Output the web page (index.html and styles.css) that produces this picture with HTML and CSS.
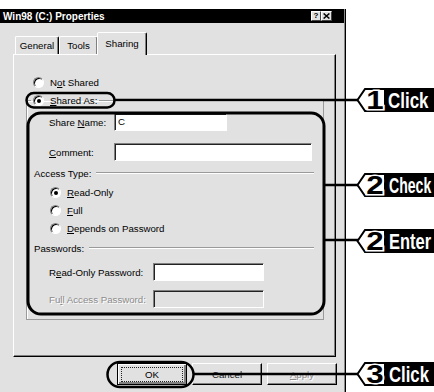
FILE: index.html
```html
<!DOCTYPE html>
<html>
<head>
<meta charset="utf-8">
<title>Win98 (C:) Properties</title>
<link rel="stylesheet" href="styles.css">
</head>
<body>
<div class="window">
  <div class="titlebar">
    <span class="title">Win98 (C:) Properties</span>
    <span class="tb-btn help">?</span>
    <span class="tb-btn close"><svg width="7" height="6" viewBox="0 0 7 6"><path d="M0.6 0.5 L6.4 5.5 M6.4 0.5 L0.6 5.5" stroke="#000" stroke-width="1.5"/></svg></span>
  </div>
  <div class="tabs">
    <div class="tab t-general">General</div>
    <div class="tab t-tools">Tools</div>
    <div class="tab t-sharing">Sharing</div>
  </div>
  <div class="panel">
    <div class="opt top-opt"><span class="radio"></span><span>N<u>o</u>t Shared</span></div>
    <fieldset class="group">
      <legend class="legend"><span class="opt"><span class="radio on"></span><span><u>S</u>hared As:</span></span></legend>
      <div class="field f-name"><span class="lbl">Share <u>N</u>ame:</span><span class="input w-name">C</span></div>
      <div class="field f-comment"><span class="lbl"><u>C</u>omment:</span><span class="input w-comment"></span></div>
      <div class="section s-access"><span>Access Type:</span><span class="rule"></span></div>
      <div class="opt sub first"><span class="radio on"></span><span><u>R</u>ead-Only</span></div>
      <div class="opt sub"><span class="radio"></span><span><u>F</u>ull</span></div>
      <div class="opt sub"><span class="radio"></span><span><u>D</u>epends on Password</span></div>
      <div class="section s-pass"><span>Passwords:</span><span class="rule"></span></div>
      <div class="field f-ro"><span class="lbl lbl-pw">R<u>e</u>ad-Only Password:</span><span class="input w-pw"></span></div>
      <div class="field f-full"><span class="lbl lbl-pw off">Fu<u>l</u>l Access Password:</span><span class="input w-pw disabled"></span></div>
    </fieldset>
  </div>
  <div class="buttons">
    <div class="btn default"><span class="focus">OK</span></div>
    <div class="btn cancel">Cancel</div>
    <div class="btn off"><span><u>A</u>pply</span></div>
  </div>
</div>

<svg class="marks" width="434" height="392" viewBox="0 0 434 392">
  <g fill="none" stroke="#000" stroke-width="2.5">
    <rect x="26.5" y="93" width="88" height="14.5" rx="7.25"/>
    <line x1="114" y1="100" x2="358" y2="100"/>
    <rect x="28" y="113" width="296" height="201" rx="13" stroke-width="3"/>
    <line x1="325" y1="185" x2="358" y2="185"/>
    <line x1="325" y1="240" x2="358" y2="240"/>
    <rect x="107.5" y="362" width="86" height="25" rx="12.5"/>
    <line x1="194" y1="374" x2="358" y2="374"/>
  </g>
  <g transform="translate(356,88)">
    <path class="tag-shape" d="M1.5 12 L9 1 H30 V23 H9 Z"/>
    <rect class="tag-box" x="28" y="0" width="50" height="24"/>
    <text class="tag-num halo" transform="translate(19,21) scale(1.25,1)" text-anchor="middle">1</text>
    <text class="tag-num" transform="translate(19,21) scale(1.25,1)" text-anchor="middle">1</text>
    <text class="tag-lbl" transform="translate(32,20) scale(0.77,1)">Click</text>
  </g>
  <g transform="translate(356,173)">
    <path class="tag-shape" d="M1.5 12 L9 1 H30 V23 H9 Z"/>
    <rect class="tag-box" x="28" y="0" width="50" height="24"/>
    <text class="tag-num halo" transform="translate(19,21) scale(1.25,1)" text-anchor="middle">2</text>
    <text class="tag-num" transform="translate(19,21) scale(1.25,1)" text-anchor="middle">2</text>
    <text class="tag-lbl" transform="translate(33,20) scale(0.64,1)">Check</text>
  </g>
  <g transform="translate(356,229)">
    <path class="tag-shape" d="M1.5 12 L9 1 H30 V23 H9 Z"/>
    <rect class="tag-box" x="28" y="0" width="50" height="24"/>
    <text class="tag-num halo" transform="translate(19,21) scale(1.25,1)" text-anchor="middle">2</text>
    <text class="tag-num" transform="translate(19,21) scale(1.25,1)" text-anchor="middle">2</text>
    <text class="tag-lbl" transform="translate(33,20) scale(0.75,1)">Enter</text>
  </g>
  <g transform="translate(356,362)">
    <path class="tag-shape" d="M1.5 12 L9 1 H30 V23 H9 Z"/>
    <rect class="tag-box" x="28" y="0" width="50" height="24"/>
    <text class="tag-num halo" transform="translate(19,21) scale(1.25,1)" text-anchor="middle">3</text>
    <text class="tag-num" transform="translate(19,21) scale(1.25,1)" text-anchor="middle">3</text>
    <text class="tag-lbl" transform="translate(33,20) scale(0.76,1)">Click</text>
  </g>
</svg>
</body>
</html>
```

FILE: styles.css
```css
* { box-sizing: border-box; }
html, body { margin: 0; padding: 0; }
body {
  width: 434px;
  height: 392px;
  overflow: hidden;
  position: relative;
  background: #fff;
  font-family: "Liberation Sans", Arial, sans-serif;
  font-size: 9.7px;
  line-height: 11px;
  color: #000;
}
u { text-decoration: underline; text-underline-offset: 1px; }

.window {
  width: 346px;
  height: 383px;
  margin-top: 9px;
  background: #e1e1e1;
  border-right: 1px solid #000;
  box-shadow: inset -1px 0 0 #8a8a8a;
  display: flex;
  flex-direction: column;
}

.titlebar {
  width: 344px;
  height: 14px;
  background: #000;
  color: #fff;
  display: flex;
  align-items: center;
  padding: 0 12px 0 3px;
}
.title { flex: 1; font-size: 10px; font-weight: bold; }
.tb-btn {
  width: 10px;
  height: 10px;
  background: #e1e1e1;
  border: 1px solid;
  border-color: #fff #444 #444 #fff;
  display: flex;
  align-items: center;
  justify-content: center;
  color: #000;
  font-weight: bold;
  font-size: 8px;
  line-height: 8px;
}
.tb-btn.close { width: 11px; }

.tabs {
  height: 31px;
  display: flex;
  align-items: flex-end;
  padding-left: 15px;
}
.tab {
  height: 18px;
  border: 1px solid;
  border-bottom: none;
  border-color: #fff #000 transparent #fff;
  border-radius: 2px 2px 0 0;
  box-shadow: inset -1px 0 0 #808080;
  padding-top: 3px;
  text-align: center;
  line-height: 11px;
}
.t-general { width: 44px; }
.t-tools { width: 39px; }
.t-sharing {
  width: 50px;
  height: 23px;
  margin-left: -1px;
  margin-bottom: -1px;
  padding-top: 5px;
  background: #e1e1e1;
  position: relative;
  z-index: 1;
}

.panel {
  margin-left: 13px;
  width: 323px;
  height: 303px;
  border: 1px solid;
  border-color: #fff #000 #000 #fff;
  box-shadow: inset -1px -1px 0 #808080;
  padding-top: 18px;
}

.opt {
  display: flex;
  align-items: center;
  height: 18px;
  gap: 6px;
}
.top-opt { margin-left: 19px; }

.radio {
  width: 11px;
  height: 11px;
  flex: none;
  border-radius: 50%;
  background: #fff;
  border: 1px solid;
  border-color: #808080 #fff #fff #808080;
  box-shadow: inset 1px 1px 0 #000;
  position: relative;
}
.radio.on::after {
  content: "";
  position: absolute;
  left: 3px;
  top: 3px;
  width: 4px;
  height: 4px;
  border-radius: 50%;
  background: #000;
}

.group {
  margin: 0 0 0 12px;
  width: 298px;
  padding: 0 0 11px 0;
  border: 1px solid #9a9a9a;
  box-shadow: 1px 1px 0 #fff inset;
  min-inline-size: 0;
}
.legend {
  margin-left: 4px;
  padding: 0 2px;
  height: 18px;
}

.field {
  display: flex;
  align-items: center;
  height: 18px;
}
.lbl { margin-left: 22px; width: 65px; flex: none; white-space: nowrap; }
.lbl-pw { width: 104px; }
.off { color: #8c8c8c; text-shadow: 1px 1px 0 #fff; }
.f-name { margin-top: 4px; }
.f-comment { margin-top: 12px; }
.f-ro { margin-top: 8px; }
.f-full { margin-top: 9px; }

.input {
  height: 18px;
  background: #fff;
  border: 1px solid;
  border-color: #808080 #fff #fff #808080;
  box-shadow: inset 1px 1px 0 #222;
  padding: 2px 0 0 3px;
  line-height: 12px;
}
.w-name { width: 113px; }
.w-comment { width: 198px; }
.w-pw { width: 111px; }
.input.disabled { background: #e1e1e1; }

.section {
  display: flex;
  align-items: center;
  height: 14px;
  margin-left: 7px;
  margin-right: 9px;
  gap: 5px;
}
.rule {
  flex: 1;
  height: 2px;
  border-top: 1px solid #9a9a9a;
  border-bottom: 1px solid #fff;
}
.s-access { margin-top: 5px; }
.s-pass { margin-top: 4px; }
.sub { margin-left: 23px; }
.sub.first { margin-top: 3px; }

.buttons {
  display: flex;
  justify-content: flex-end;
  gap: 5px;
  padding-right: 8px;
  margin-top: 6px;
}
.btn {
  width: 70px;
  height: 22px;
  border: 1px solid;
  border-color: #fff #000 #000 #fff;
  box-shadow: inset -1px -1px 0 #808080;
  display: flex;
  align-items: center;
  justify-content: center;
}
.btn.default {
  border-color: #000;
  box-shadow: inset 1px 1px 0 #fff, inset -2px -2px 0 #808080;
}
.focus {
  width: 62px;
  height: 15px;
  border: 1px dotted #222;
  display: flex;
  align-items: center;
  justify-content: center;
}
.cancel { color: #222; }

.marks {
  position: absolute;
  left: 0;
  top: 0;
  pointer-events: none;
}
.tag-shape { fill: #fff; stroke: #000; stroke-width: 2; }
.tag-box { fill: #000; }
.tag-num {
  font-family: "Liberation Sans", Arial, sans-serif;
  font-weight: bold;
  font-size: 25px;
  fill: #000;
}
.tag-num.halo { stroke: #fff; stroke-width: 3; }
.tag-lbl {
  font-family: "Liberation Sans", Arial, sans-serif;
  font-weight: bold;
  font-size: 22px;
  fill: #fff;
}
```
